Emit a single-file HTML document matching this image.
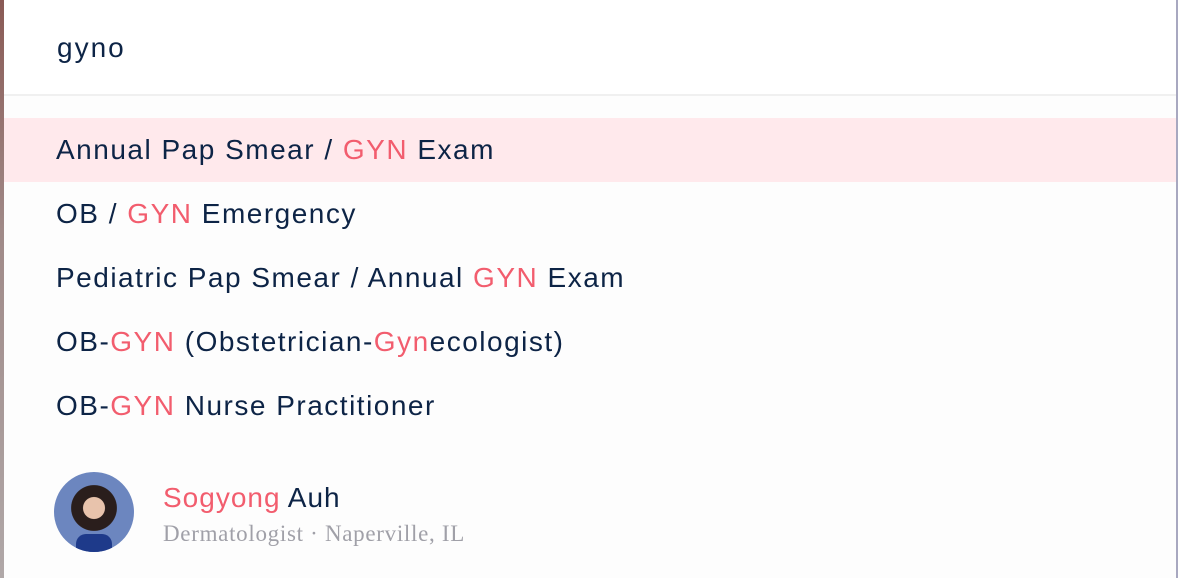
<!DOCTYPE html>
<html><head><style>
html,body{margin:0;padding:0;}
body{width:1178px;height:578px;position:relative;overflow:hidden;background:#fdfdfd;font-family:"Liberation Sans",sans-serif;color:#0d2446;}
.lstrip{position:absolute;left:0;top:0;width:4px;height:578px;background:linear-gradient(#8a5a55,#a08a88 40%,#b0a8a8);}
.rline{position:absolute;left:1176px;top:0;width:2px;height:578px;background:#a8a8c0;}
.top{position:absolute;left:4px;top:0;width:1172px;height:94px;background:#fff;}
.sep{position:absolute;left:4px;top:94px;width:1172px;height:2px;background:#f0f0f0;}
.q{position:absolute;left:57px;top:32px;font-size:28px;letter-spacing:2px;}
.row{position:absolute;left:56px;font-size:28px;white-space:nowrap;letter-spacing:1.5px;}
.hl{position:absolute;left:4px;top:118px;width:1172px;height:64px;background:#ffe9ec;}
.r{color:#f25d6e;}
.av{position:absolute;left:54px;top:472px;width:80px;height:80px;border-radius:50%;background:radial-gradient(circle at 50% 45%,#e8c3ac 0 18%,#2a1e1c 19% 38%,#6c86bf 39%);overflow:hidden;}
.av:after{content:"";position:absolute;left:22px;top:62px;width:36px;height:20px;background:#1e3a8a;border-radius:10px 10px 0 0;}
.name{position:absolute;left:163px;top:482px;font-size:28px;letter-spacing:1px;}
.sub{position:absolute;left:163px;top:521px;font-size:23px;letter-spacing:0.7px;font-family:"Liberation Serif",serif;color:#a0a0a8;}
</style></head><body>
<div class="lstrip"></div>
<div class="top"></div>
<div class="sep"></div>
<div class="q">gyno</div>
<div class="hl"></div>
<div class="row" style="top:134px">Annual Pap Smear / <span class="r">GYN</span> Exam</div>
<div class="row" style="top:198px">OB / <span class="r">GYN</span> Emergency</div>
<div class="row" style="top:262px">Pediatric Pap Smear / Annual <span class="r">GYN</span> Exam</div>
<div class="row" style="top:326px">OB-<span class="r">GYN</span> (Obstetrician-<span class="r">Gyn</span>ecologist)</div>
<div class="row" style="top:390px">OB-<span class="r">GYN</span> Nurse Practitioner</div>
<div class="av"></div>
<div class="name"><span class="r">Sogyong</span> Auh</div>
<div class="sub">Dermatologist · Naperville, IL</div>
<div class="rline"></div>
</body></html>
